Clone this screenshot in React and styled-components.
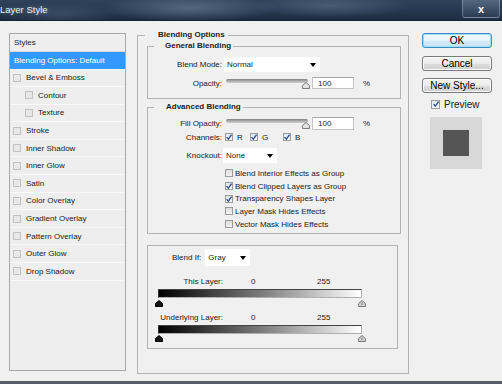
import React from "react";
import styled, { createGlobalStyle } from "styled-components";

const GlobalStyle = createGlobalStyle`
  html, body { margin: 0; padding: 0; background: #f0f0f0; }
  body { font-family: "Liberation Sans", Arial, sans-serif; color: #222; }
  * { box-sizing: border-box; }
`;

const Window = styled.div`
  width: 502px;
  height: 384px;
  display: flex;
  flex-direction: column;
  background: #f0f0f0;
  overflow: hidden;
`;

const TitleBar = styled.div`
  height: 21px;
  flex: none;
  display: flex;
  justify-content: space-between;
  align-items: flex-start;
  background:
    radial-gradient(ellipse 90px 14px at 190px 8px, rgba(120, 140, 165, 0.55), transparent),
    radial-gradient(ellipse 80px 12px at 330px 6px, rgba(110, 130, 155, 0.45), transparent),
    radial-gradient(ellipse 60px 12px at 60px 14px, rgba(90, 110, 135, 0.4), transparent),
    linear-gradient(to bottom, #2f425a 0%, #24364d 60%, #1d2c40 100%);
  border-bottom: 1px solid #18222f;
`;

const Title = styled.div`
  font-size: 9.5px;
  line-height: 20px;
  color: #eef2f6;
  text-shadow: 0 0 4px rgba(255, 255, 255, 0.35);
`;

const CloseButton = styled.div`
  width: 38px;
  height: 18px;
  margin-right: 2px;
  display: flex;
  align-items: center;
  justify-content: center;
  font-size: 11px;
  font-weight: bold;
  color: #fff;
  border: 1px solid rgba(200, 215, 235, 0.35);
  border-top: none;
  border-radius: 0 0 3px 3px;
  background: linear-gradient(to bottom, rgba(120, 140, 165, 0.5), rgba(60, 80, 105, 0.4));
`;

const Body = styled.div`
  flex: 1;
  display: flex;
  align-items: flex-start;
  padding: 12px 0 0 9px;
  border-bottom: 3px solid #585e68;
`;

/* ---------- styles list ---------- */

const StylesPanel = styled.div`
  width: 117px;
  height: 338px;
  margin-right: 11px;
  border: 1px solid #a9a9a9;
  background: #eeeeee;
  flex: none;
`;

const StyleRow = styled.div`
  height: ${(p) => p.$h || 17.6}px;
  display: flex;
  align-items: center;
  padding-left: ${(p) => p.$indent || 3}px;
  font-size: 8px;
  border-bottom: 1px solid ${(p) => (p.$header ? "#d9d9d9" : "#f9f9f9")};
  background: ${(p) => (p.$active ? "#3399ff" : "transparent")};
  color: ${(p) => (p.$active ? "#fff" : "#222")};
`;

const ListBox = styled.span`
  width: 8px;
  height: 8px;
  margin-right: 5px;
  flex: none;
  border: 1px solid #c2c2c2;
  background: #e8e8e8;
`;

/* ---------- groups ---------- */

const MainGroup = styled.div`
  width: 272px;
  height: 339px;
  margin-top: 2px;
  padding: 0 7px 0 9px;
  border: 1px solid #b3b3b3;
  flex: none;
`;

const Section = styled.div`
  margin: ${(p) => p.$mt}px ${(p) => p.$mr || 0}px 0 0;
  padding-bottom: ${(p) => p.$pb}px;
  border: 1px solid #b3b3b3;
`;

const Legend = styled.div`
  display: table;
  height: 10px;
  margin: -6px 0 0 ${(p) => p.$ml}px;
  padding: 0 ${(p) => p.$pr || 3}px 0 ${(p) => p.$pl}px;
  background: #f0f0f0;
  font-size: 8px;
  font-weight: bold;
  line-height: 10px;
  white-space: nowrap;
`;

const BlendLegend = styled.div`
  display: inline-flex;
  align-items: center;
  height: 17px;
  margin: -7px 0 0 17px;
  padding: 0 5px 0 7px;
  background: #f0f0f0;
  font-size: 8px;
`;

const Row = styled.div`
  display: flex;
  align-items: center;
  height: ${(p) => p.$h}px;
  margin-top: ${(p) => p.$mt}px;
  font-size: 8px;
`;

const FieldLabel = styled.div`
  width: ${(p) => p.$w || 74}px;
  flex: none;
  text-align: right;
  white-space: nowrap;
`;

const Select = styled.div`
  width: ${(p) => p.$w}px;
  height: ${(p) => p.$h || 15}px;
  margin-left: ${(p) => p.$ml}px;
  flex: none;
  display: flex;
  align-items: center;
  justify-content: space-between;
  padding: 0 4px 0 3px;
  background: #fff;
  font-size: 8px;
`;

const Arrow = styled.span`
  width: 0;
  height: 0;
  border-left: 3px solid transparent;
  border-right: 3px solid transparent;
  border-top: 4px solid #000;
`;

const Slider = styled.div`
  width: 84px;
  height: ${(p) => p.$h}px;
  margin-left: 4px;
  flex: none;
  display: flex;
  flex-direction: column;
`;

const Track = styled.div`
  width: 82px;
  height: 4px;
  margin-top: 2px;
  border-radius: 2px;
  background: linear-gradient(to bottom, #7e7e7e, #b4b4b4 60%, #cfcfcf);
`;

const ThumbWrap = styled.div`
  align-self: flex-end;
  margin-top: -1px;
  height: 7px;
  line-height: 0;
`;

const NumInput = styled.div`
  width: 42px;
  height: ${(p) => p.$h}px;
  margin-left: 2px;
  flex: none;
  display: flex;
  align-items: center;
  padding-left: 5px;
  background: #fff;
  border: 1px solid #c4c4c4;
  border-top-color: #a8a8a8;
`;

const Percent = styled.span`
  margin-left: 9px;
`;

const ChannelItem = styled.div`
  width: ${(p) => p.$w}px;
  margin-left: ${(p) => p.$ml || 0}px;
  display: flex;
  align-items: center;
  flex: none;
`;

const Box = styled.span`
  width: ${(p) => p.$s || 8}px;
  height: ${(p) => p.$s || 8}px;
  flex: none;
  display: flex;
  align-items: center;
  justify-content: center;
  margin-right: ${(p) => p.$gap}px;
  border: 1px solid #9c9c9c;
  background: ${(p) =>
    p.$on
      ? "linear-gradient(to bottom, #dde9f7, #f6f9fd)"
      : "linear-gradient(to bottom, #dcdcdc, #f4f4f4)"};
`;

const CheckList = styled.div`
  margin-top: 4px;
  padding-left: 77px;
`;

const CheckRow = styled.div`
  height: 12.7px;
  display: flex;
  align-items: center;
  font-size: 8px;
`;

const Value = styled.div`
  width: ${(p) => p.$w || "auto"};
  margin-left: ${(p) => p.$ml || 0}px;
  flex: none;
`;

const GradientBar = styled.div`
  width: 204px;
  height: 9px;
  margin: ${(p) => p.$mt}px 0 0 10px;
  background: linear-gradient(to right, #000 0%, #7a7a7a 50%, #fff 100%);
  border: 1px solid #b0b0b0;
  border-left-color: #333;
  border-top-color: #444;
`;

const ThumbRow = styled.div`
  width: 211px;
  height: 7px;
  margin: ${(p) => p.$mt}px 0 0 7px;
  display: flex;
  justify-content: space-between;
  line-height: 0;
`;

/* ---------- right column ---------- */

const SideColumn = styled.div`
  width: 70px;
  margin-left: 13px;
  flex: none;
  display: flex;
  flex-direction: column;
`;

const Button = styled.div`
  height: 15px;
  margin-top: ${(p) => p.$mt || 0}px;
  display: flex;
  align-items: center;
  justify-content: center;
  font-size: 10px;
  color: #000;
  border-radius: 3px;
  border: 1px solid ${(p) => (p.$default ? "#3c8dc7" : "#7a7a7a")};
  box-shadow: inset 0 0 0 1px ${(p) => (p.$default ? "#9fdcf7" : "#fbfbfb")};
  background: ${(p) =>
    p.$default
      ? "linear-gradient(to bottom, #f2f9fd 0%, #e6f2fa 50%, #d4e9f6 51%, #c9e3f4 100%)"
      : "linear-gradient(to bottom, #f4f4f4 0%, #ebebeb 50%, #dddddd 51%, #d0d0d0 100%)"};
`;

const PreviewRow = styled.div`
  height: 10px;
  margin: 6px 0 0 9px;
  display: flex;
  align-items: center;
  font-size: 10px;
`;

const PreviewBox = styled.div`
  width: 52px;
  height: 52px;
  margin: 8px 0 0 8px;
  display: flex;
  align-items: center;
  justify-content: center;
  background: #d8d8d8;
`;

const Swatch = styled.div`
  width: 26px;
  height: 26px;
  background: #555555;
`;

const Tick = () => (
  <svg width="6" height="6" viewBox="0 0 6 6">
    <path d="M0.6 3.2 L2.3 5.2 L5.6 0.6" fill="none" stroke="#2b4f8f" strokeWidth="1.3" />
  </svg>
);

const Check = ({ on, gap = 4, size }) => (
  <Box $on={on} $gap={gap} $s={size}>
    {on && <Tick />}
  </Box>
);

const HouseThumb = ({ dark, light }) => (
  <svg width="8" height="7" viewBox="0 0 8 7">
    <polygon
      points="4,0.5 7.5,3.5 7.5,6.5 0.5,6.5 0.5,3.5"
      fill={dark ? "#151515" : light ? "#e4e4e4" : "#d0d0d0"}
      stroke={dark ? "#000" : "#7d7d7d"}
      strokeWidth="1"
    />
    {!dark && !light && <line x1="4" y1="2.5" x2="4" y2="5" stroke="#7d7d7d" strokeWidth="1" />}
  </svg>
);

const OpacitySlider = ({ h }) => (
  <Slider $h={h}>
    <Track />
    <ThumbWrap>
      <HouseThumb light />
    </ThumbWrap>
  </Slider>
);

const styleItems = [
  { label: "Bevel & Emboss" },
  { label: "Contour", sub: true },
  { label: "Texture", sub: true },
  { label: "Stroke" },
  { label: "Inner Shadow" },
  { label: "Inner Glow" },
  { label: "Satin" },
  { label: "Color Overlay" },
  { label: "Gradient Overlay" },
  { label: "Pattern Overlay" },
  { label: "Outer Glow" },
  { label: "Drop Shadow" },
];

const advancedChecks = [
  { label: "Blend Interior Effects as Group", on: false },
  { label: "Blend Clipped Layers as Group", on: true },
  { label: "Transparency Shapes Layer", on: true },
  { label: "Layer Mask Hides Effects", on: false },
  { label: "Vector Mask Hides Effects", on: false },
];

export default function App() {
  return (
    <>
      <GlobalStyle />
      <Window>
        <TitleBar>
          <Title>Layer Style</Title>
          <CloseButton>x</CloseButton>
        </TitleBar>
        <Body>
          <StylesPanel>
            <StyleRow $header $h={18} $indent={4}>
              Styles
            </StyleRow>
            <StyleRow $active $h={17.5} $indent={4}>
              Blending Options: Default
            </StyleRow>
            {styleItems.map((s) => (
              <StyleRow key={s.label} $indent={s.sub ? 15 : 3}>
                <ListBox />
                {s.label}
              </StyleRow>
            ))}
          </StylesPanel>

          <MainGroup>
            <Legend $ml={-2} $pl={13}>Blending Options</Legend>

            <Section $mt={6} $pb={9}>
              <Legend $ml={6} $pl={11} $pr={2}>General Blending</Legend>
              <Row $h={15} $mt={6}>
                <FieldLabel>Blend Mode:</FieldLabel>
                <Select $w={96} $ml={2}>
                  Normal
                  <Arrow />
                </Select>
              </Row>
              <Row $h={12} $mt={5}>
                <FieldLabel>Opacity:</FieldLabel>
                <OpacitySlider h={12} />
                <NumInput $h={12}>100</NumInput>
                <Percent>%</Percent>
              </Row>
            </Section>

            <Section $mt={8} $pb={3}>
              <Legend $ml={6} $pl={12} $pr={2}>Advanced Blending</Legend>
              <Row $h={13} $mt={5}>
                <FieldLabel>Fill Opacity:</FieldLabel>
                <OpacitySlider h={13} />
                <NumInput $h={13}>100</NumInput>
                <Percent>%</Percent>
              </Row>
              <Row $h={10} $mt={2}>
                <FieldLabel>Channels:</FieldLabel>
                <ChannelItem $w={25} $ml={3}>
                  <Check on />R
                </ChannelItem>
                <ChannelItem $w={33}>
                  <Check on />G
                </ChannelItem>
                <ChannelItem $w={30}>
                  <Check on />B
                </ChannelItem>
              </Row>
              <Row $h={15} $mt={6}>
                <FieldLabel>Knockout:</FieldLabel>
                <Select $w={54} $ml={1}>
                  None
                  <Arrow />
                </Select>
              </Row>
              <CheckList>
                {advancedChecks.map((c) => (
                  <CheckRow key={c.label}>
                    <Check on={c.on} gap={2} />
                    {c.label}
                  </CheckRow>
                ))}
              </CheckList>
            </Section>

            <Section $mt={11} $mr={3} $pb={6}>
              <BlendLegend>
                Blend If:
                <Select $w={45} $h={17} $ml={4}>
                  Gray
                  <Arrow />
                </Select>
              </BlendLegend>
              <Row $h={10} $mt={10}>
                <FieldLabel $w={75}>This Layer:</FieldLabel>
                <Value $ml={28} $w="66px">0</Value>
                <Value>255</Value>
              </Row>
              <GradientBar $mt={3} />
              <ThumbRow $mt={2}>
                <HouseThumb dark />
                <HouseThumb />
              </ThumbRow>
              <Row $h={10} $mt={5}>
                <FieldLabel $w={75}>Underlying Layer:</FieldLabel>
                <Value $ml={28} $w="66px">0</Value>
                <Value>255</Value>
              </Row>
              <GradientBar $mt={3} />
              <ThumbRow $mt={1}>
                <HouseThumb dark />
                <HouseThumb />
              </ThumbRow>
            </Section>
          </MainGroup>

          <SideColumn>
            <Button $default>OK</Button>
            <Button $mt={8}>Cancel</Button>
            <Button $mt={7}>New Style...</Button>
            <PreviewRow>
              <Check on gap={4} size={9} />
              Preview
            </PreviewRow>
            <PreviewBox>
              <Swatch />
            </PreviewBox>
          </SideColumn>
        </Body>
      </Window>
    </>
  );
}
